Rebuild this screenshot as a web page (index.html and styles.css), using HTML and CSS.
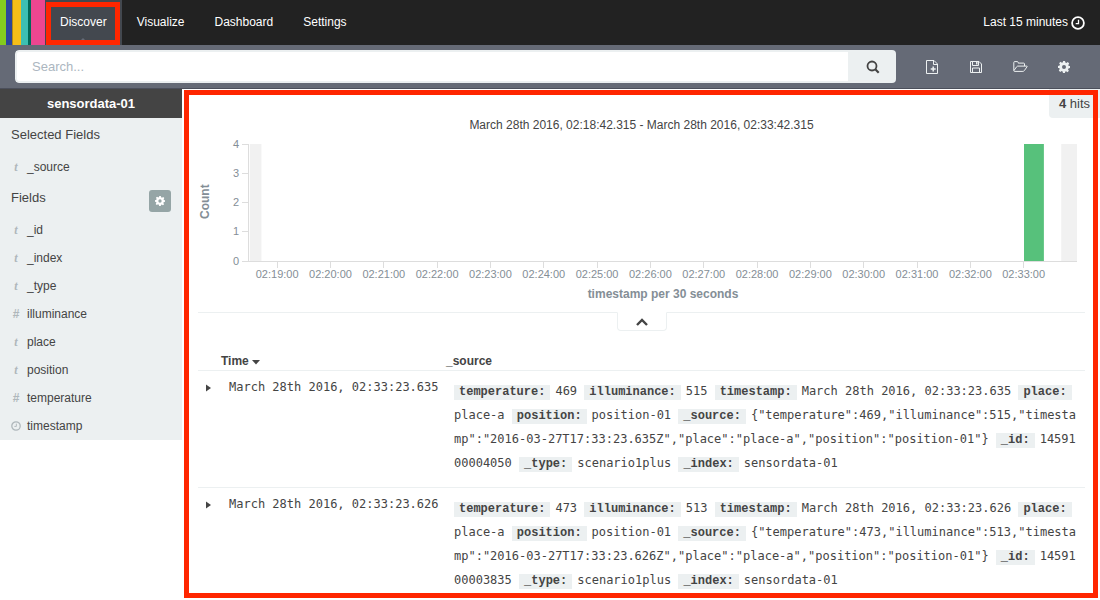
FILE: index.html
```html
<!DOCTYPE html>
<html lang="en">
<head>
<meta charset="utf-8">
<title>Discover</title>
<link rel="stylesheet" href="styles.css">
</head>
<body>
<svg class="defs" aria-hidden="true">
  <symbol id="gear" viewBox="0 0 12 12"><path fill-rule="evenodd" d="M5 0h2l.4 1.6 1 .4 1.4-.9 1.4 1.4-.9 1.4.4 1L12 5v2l-1.600.4-.4 1 .9 1.400-1.400 1.400-1.400-.9-1 .4L7 12H5l-.4-1.600-1-.4-1.400.9L.8 9.500l.9-1.400-.4-1L0 7V5l1.600-.4.4-1-.9-1.400L2.500.8l1.400.9 1-.4zM6 4a2 2 0 1 0 0 4 2 2 0 0 0 0-4z"/></symbol>
  <symbol id="clock" viewBox="0 0 14 14"><circle cx="7" cy="7" r="5.900" fill="none" stroke="currentColor" stroke-width="1.800"/><path d="M7.500 3.700v3.900H4.700" fill="none" stroke="currentColor" stroke-width="1.300"/></symbol>
</svg>

<header class="topbar">
  <div class="logo" aria-hidden="true"><i class="stripe green"></i><i class="stripe blue"></i><i class="stripe yellow"></i><i class="stripe teal"></i><i class="stripe dark"></i><i class="stripe pink"></i></div>
  <nav class="nav">
    <a class="nav-link active" href="#">Discover</a>
    <a class="nav-link" href="#">Visualize</a>
    <a class="nav-link" href="#">Dashboard</a>
    <a class="nav-link" href="#">Settings</a>
  </nav>
  <a class="timepicker" href="#">Last 15 minutes <svg width="14" height="14"><use href="#clock"/></svg></a>
</header>

<div class="toolbar">
  <form class="search">
    <input class="search-input" type="text" placeholder="Search..." aria-label="Search">
    <button class="search-button" type="button" aria-label="Submit search"><svg width="14" height="14" viewBox="0 0 14 14" fill="none" stroke="currentColor"><circle cx="6" cy="6" r="4.500" stroke-width="1.800"/><path d="M9.300 9.300l3.400 3.400" stroke-width="2.200"/></svg></button>
  </form>
  <div class="actions">
    <button class="action" type="button" aria-label="New search"><svg width="12" height="14" viewBox="0 0 12 14" fill="none" stroke="currentColor"><path d="M.5.5h7.500l3.500 3.500v9.500H.5zM7.500.5V4.500h4"/><path d="M7.200 6.500v5M4.700 9h5" stroke-width="1.500"/></svg></button>
    <button class="action" type="button" aria-label="Save search"><svg width="12" height="12" viewBox="0 0 12 12" fill="none" stroke="currentColor"><path d="M.5.5h8.500l2.500 2.500v8.500H.5zM2.500.5v4h6v-4M2.500 11.500v-4.500h7v4.500"/><path d="M6.800 1v2.500" stroke-width="1.500"/></svg></button>
    <button class="action" type="button" aria-label="Load saved search"><svg width="15" height="12" viewBox="0 0 15 12" fill="none" stroke="currentColor"><path d="M.8 9.500V1.500q0-.9.9-.9h2.600q.9 0 .9.900v.6h5.400q.9 0 .9.900v2M.8 9.800l2.800-4q.5-.7 1.300-.7h8.700q1 0 .4.800l-2.600 3.600q-.6.900-1.500.9H1.600q-.8 0-.8-.6z"/></svg></button>
    <button class="action" type="button" aria-label="Settings"><svg width="12" height="12" fill="currentColor"><use href="#gear"/></svg></button>
  </div>
</div>

<div class="page">
  <aside class="sidebar">
    <div class="index-name">sensordata-01</div>
    <div class="heading"><span>Selected Fields</span></div>
    <ul class="fields">
      <li class="field"><i class="type">t</i>_source</li>
    </ul>
    <div class="heading"><span>Fields</span><button class="field-settings" type="button" aria-label="Field settings"><svg width="10" height="10" fill="currentColor"><use href="#gear"/></svg></button></div>
    <ul class="fields">
      <li class="field"><i class="type">t</i>_id</li>
      <li class="field"><i class="type">t</i>_index</li>
      <li class="field"><i class="type">t</i>_type</li>
      <li class="field"><b class="type number">#</b>illuminance</li>
      <li class="field"><i class="type">t</i>place</li>
      <li class="field"><i class="type">t</i>position</li>
      <li class="field"><b class="type number">#</b>temperature</li>
      <li class="field"><span class="type"><svg width="10" height="10"><use href="#clock"/></svg></span>timestamp</li>
    </ul>
  </aside>

  <main class="content">
    <div class="hits"><strong>4</strong> hits</div>
    <div class="range">March 28th 2016, 02:18:42.315 - March 28th 2016, 02:33:42.315</div>
    <div class="chart">
      <div class="y-title">Count</div>
      <svg class="y-axis" shape-rendering="crispEdges">
        <path class="axis" d="M36.500 0v118M30 .5h6M30 29.500h6M30 58.500h6M30 87.500h6M30 117.500h6"/>
        <g class="tick" text-anchor="end"><text x="27" y="4">4</text><text x="27" y="33">3</text><text x="27" y="62">2</text><text x="27" y="91">1</text><text x="27" y="121">0</text></g>
      </svg>
      <svg class="plot">
        <rect class="partial" x="0.100%" y="0" width="1.400%" height="117"/>
        <rect class="partial" x="98.100%" y="0" width="1.900%" height="117"/>
        <rect class="bar" x="93.600%" y="0" width="2.400%" height="117"/>
        <line class="axis" x1="0" x2="100%" y1="117.500" y2="117.500"/>
        <g class="axis" shape-rendering="crispEdges">
          <line x1="3.400%" x2="3.400%" y1="118" y2="124"/><line x1="9.840%" x2="9.840%" y1="118" y2="124"/><line x1="16.280%" x2="16.280%" y1="118" y2="124"/><line x1="22.720%" x2="22.720%" y1="118" y2="124"/><line x1="29.160%" x2="29.160%" y1="118" y2="124"/><line x1="35.600%" x2="35.600%" y1="118" y2="124"/><line x1="42.040%" x2="42.040%" y1="118" y2="124"/><line x1="48.480%" x2="48.480%" y1="118" y2="124"/><line x1="54.920%" x2="54.920%" y1="118" y2="124"/><line x1="61.360%" x2="61.360%" y1="118" y2="124"/><line x1="67.800%" x2="67.800%" y1="118" y2="124"/><line x1="74.240%" x2="74.240%" y1="118" y2="124"/><line x1="80.680%" x2="80.680%" y1="118" y2="124"/><line x1="87.120%" x2="87.120%" y1="118" y2="124"/><line x1="93.560%" x2="93.560%" y1="118" y2="124"/>
        </g>
        <g class="tick" text-anchor="middle">
          <text x="3.400%" y="134">02:19:00</text><text x="9.840%" y="134">02:20:00</text><text x="16.280%" y="134">02:21:00</text><text x="22.720%" y="134">02:22:00</text><text x="29.160%" y="134">02:23:00</text><text x="35.600%" y="134">02:24:00</text><text x="42.040%" y="134">02:25:00</text><text x="48.480%" y="134">02:26:00</text><text x="54.920%" y="134">02:27:00</text><text x="61.360%" y="134">02:28:00</text><text x="67.800%" y="134">02:29:00</text><text x="74.240%" y="134">02:30:00</text><text x="80.680%" y="134">02:31:00</text><text x="87.120%" y="134">02:32:00</text><text x="93.560%" y="134">02:33:00</text>
        </g>
        <text class="x-title" x="50%" y="154" text-anchor="middle">timestamp per 30 seconds</text>
      </svg>
    </div>
    <div class="divider">
      <button class="collapse" type="button" aria-label="Hide chart"><svg width="12" height="8" viewBox="0 0 12 8"><path d="M1 7l5-5 5 5" fill="none" stroke="currentColor" stroke-width="2.400"/></svg></button>
    </div>

    <table class="docs">
      <thead><tr><th class="col-toggle"></th><th class="col-time">Time <svg width="8" height="5"><path d="M0 0h8L4 4.500z" fill="currentColor"/></svg></th><th>_source</th></tr></thead>
      <tbody>
        <tr>
          <td class="toggle"><button class="expand" type="button" aria-label="Expand row"><svg width="5" height="8"><path d="M0 0.500L5 4 0 7.500z" fill="currentColor"/></svg></button></td>
          <td class="time">March 28th 2016, 02:33:23.635</td>
          <td class="source"><b class="key">temperature:</b>469 <b class="key">illuminance:</b>515 <b class="key">timestamp:</b>March 28th 2016, 02:33:23.635 <b class="key">place:</b>place-a <b class="key">position:</b>position-01 <b class="key">_source:</b>{"temperature":469,"illuminance":515,"timestamp":"2016-03-27T17:33:23.635Z","place":"place-a","position":"position-01"} <b class="key">_id:</b>1459100004050 <b class="key">_type:</b>scenario1plus <b class="key">_index:</b>sensordata-01</td>
        </tr>
        <tr>
          <td class="toggle"><button class="expand" type="button" aria-label="Expand row"><svg width="5" height="8"><path d="M0 0.500L5 4 0 7.500z" fill="currentColor"/></svg></button></td>
          <td class="time">March 28th 2016, 02:33:23.626</td>
          <td class="source"><b class="key">temperature:</b>473 <b class="key">illuminance:</b>513 <b class="key">timestamp:</b>March 28th 2016, 02:33:23.626 <b class="key">place:</b>place-a <b class="key">position:</b>position-01 <b class="key">_source:</b>{"temperature":473,"illuminance":513,"timestamp":"2016-03-27T17:33:23.626Z","place":"place-a","position":"position-01"} <b class="key">_id:</b>1459100003835 <b class="key">_type:</b>scenario1plus <b class="key">_index:</b>sensordata-01</td>
        </tr>
      </tbody>
    </table>
  </main>
</div>
</body>
</html>
```
FILE: styles.css
```css
* { box-sizing: border-box; }
body {
  margin: 0;
  height: 100vh;
  display: flex;
  flex-direction: column;
  overflow: hidden;
  background: #fff;
  color: #444;
  font: 12px/17px "Liberation Sans", Arial, sans-serif;
}
button { border: 0; padding: 0; margin: 0; background: none; color: inherit; font: inherit; }
a { color: inherit; text-decoration: none; }
svg { display: block; }
.defs { position: absolute; width: 0; height: 0; }

/* top navigation */
.topbar { display: flex; height: 45px; flex: none; background: #222; color: #fff; }
.logo { display: flex; width: 45px; }
.stripe { display: block; }
.green { width: 6px; background: #84cb1e; }
.blue { width: 6px; background: #2c459b; }
.yellow { width: 9px; background: #f5be19; border-left: 1px solid #b28b17; }
.teal { width: 7px; background: #3dbfb2; }
.dark { width: 3px; background: #016a59; }
.pink { width: 14px; background: #ed4690; }
.nav { display: flex; flex: 1; }
.nav-link { position: relative; padding: 0 15px; line-height: 45px; }
.nav-link.active { background: #43484f; }
.nav-link.active::before {
  content: "";
  position: absolute;
  left: 50%;
  bottom: 4px;
  margin-left: -3px;
  border: 3px solid transparent;
  border-top: 0;
  border-bottom-color: #656a76;
}
.nav-link.active::after {
  content: "";
  position: absolute;
  inset: 2px 2px 0 1px;
  border: 5px solid #ff2600;
}
.timepicker { display: flex; align-items: center; gap: 3px; padding-right: 15px; }

/* search bar */
.toolbar {
  display: flex;
  align-items: center;
  flex: none;
  height: 44px;
  padding: 0 14px 0 15px;
  background: #656a76;
  border-bottom: 1px solid #4b4f5b;
}
.search { display: flex; flex: 1; height: 33px; border-radius: 4px; overflow: hidden; }
.search-input {
  flex: 1;
  min-width: 0;
  border: 2px solid #ecf0f1;
  border-radius: 4px 0 0 4px;
  padding: 0 15px;
  font: 13px "Liberation Sans", Arial, sans-serif;
}
.search-input::placeholder { color: #acb6c0; }
.search-button { display: flex; align-items: center; justify-content: center; width: 46px; background: #ecf0f1; }
.actions { display: flex; margin-left: 14px; color: #ecf0f1; }
.action { display: flex; align-items: center; justify-content: center; width: 44px; height: 33px; }

.page { display: flex; flex: 1; min-height: 0; align-items: flex-start; }

/* field list */
.sidebar { width: 182px; flex: none; background: #ecf0f1; }
.index-name { background: #444; color: #fff; font-size: 13px; font-weight: bold; line-height: 29px; text-align: center; }
.heading { display: flex; align-items: flex-end; justify-content: space-between; height: 35px; padding: 0 11px 4px; font-size: 13px; line-height: 28px; }
.field-settings { display: flex; align-items: center; justify-content: center; width: 22px; height: 22px; border-radius: 3px; background: #95a5a6; color: #fff; }
.fields { list-style: none; margin: 0; padding: 0; }
.field { display: flex; align-items: center; height: 28px; padding-left: 11px; }
.type { display: flex; justify-content: center; width: 10px; margin-right: 6px; color: #afb7bb; font-family: "Liberation Serif", serif; font-weight: bold; }
.number { font-family: "Liberation Sans", Arial, sans-serif; }

/* results */
.content { position: relative; align-self: stretch; flex: 1; min-width: 0; overflow: hidden; padding: 0 15px 0 16px; }
.content::after {
  content: "";
  position: absolute;
  inset: 1px 2px 2px;
  border: 5px solid #ff2600;
  pointer-events: none;
}
.hits {
  position: absolute;
  top: 0;
  right: 0;
  padding: 0 10px;
  border-radius: 0 0 0 4px;
  background: #ecf0f1;
  font-size: 13px;
  line-height: 29px;
}
.range { padding: 28px 0 10px; text-align: center; }
.chart { display: flex; height: 168px; padding-right: 8px; }
.y-title { width: 14px; height: 115px; color: #848e96; font-weight: bold; text-align: center; line-height: 14px; writing-mode: vertical-rl; transform: rotate(180deg); }
.y-axis { flex: none; width: 37px; height: 168px; overflow: visible; }
.plot { flex: 1; min-width: 0; height: 168px; overflow: visible; }
.axis { stroke: #ddd; fill: none; }
.tick { fill: #848e96; font-size: 11px; }
.partial { fill: #f1f1f1; }
.bar { fill: #57c17b; }
.x-title { fill: #848e96; font-size: 12px; font-weight: bold; }
.divider { display: flex; justify-content: center; border-top: 1px solid #ecf0f1; }
.collapse {
  display: flex;
  align-items: center;
  justify-content: center;
  width: 50px;
  height: 19px;
  margin-top: -1px;
  background: #fff;
  border: 1px solid #ecf0f1;
  border-top-color: #fff;
  border-radius: 0 0 4px 4px;
}

.docs { width: 100%; margin-top: 22px; table-layout: fixed; border-collapse: collapse; }
.docs th { padding: 0; border-bottom: 1px solid #ecf0f1; text-align: left; }
.docs th svg { display: inline-block; }
.col-toggle { width: 23px; }
.col-time { width: 225px; }
.docs td { padding: 8px 8px 12px; border-bottom: 1px solid #ecf0f1; vertical-align: top; font-family: "DejaVu Sans Mono", monospace; }
.docs .time { padding-right: 0; white-space: nowrap; }
.docs .source { line-height: 24px; word-break: break-all; }
.expand { display: flex; align-items: center; height: 17px; }
.key {
  display: inline-block;
  margin-right: 5px;
  padding: 0 5px;
  background: #ecf0f1;
  font-family: "Liberation Mono", "Courier New", monospace;
  line-height: 15px;
}
```
